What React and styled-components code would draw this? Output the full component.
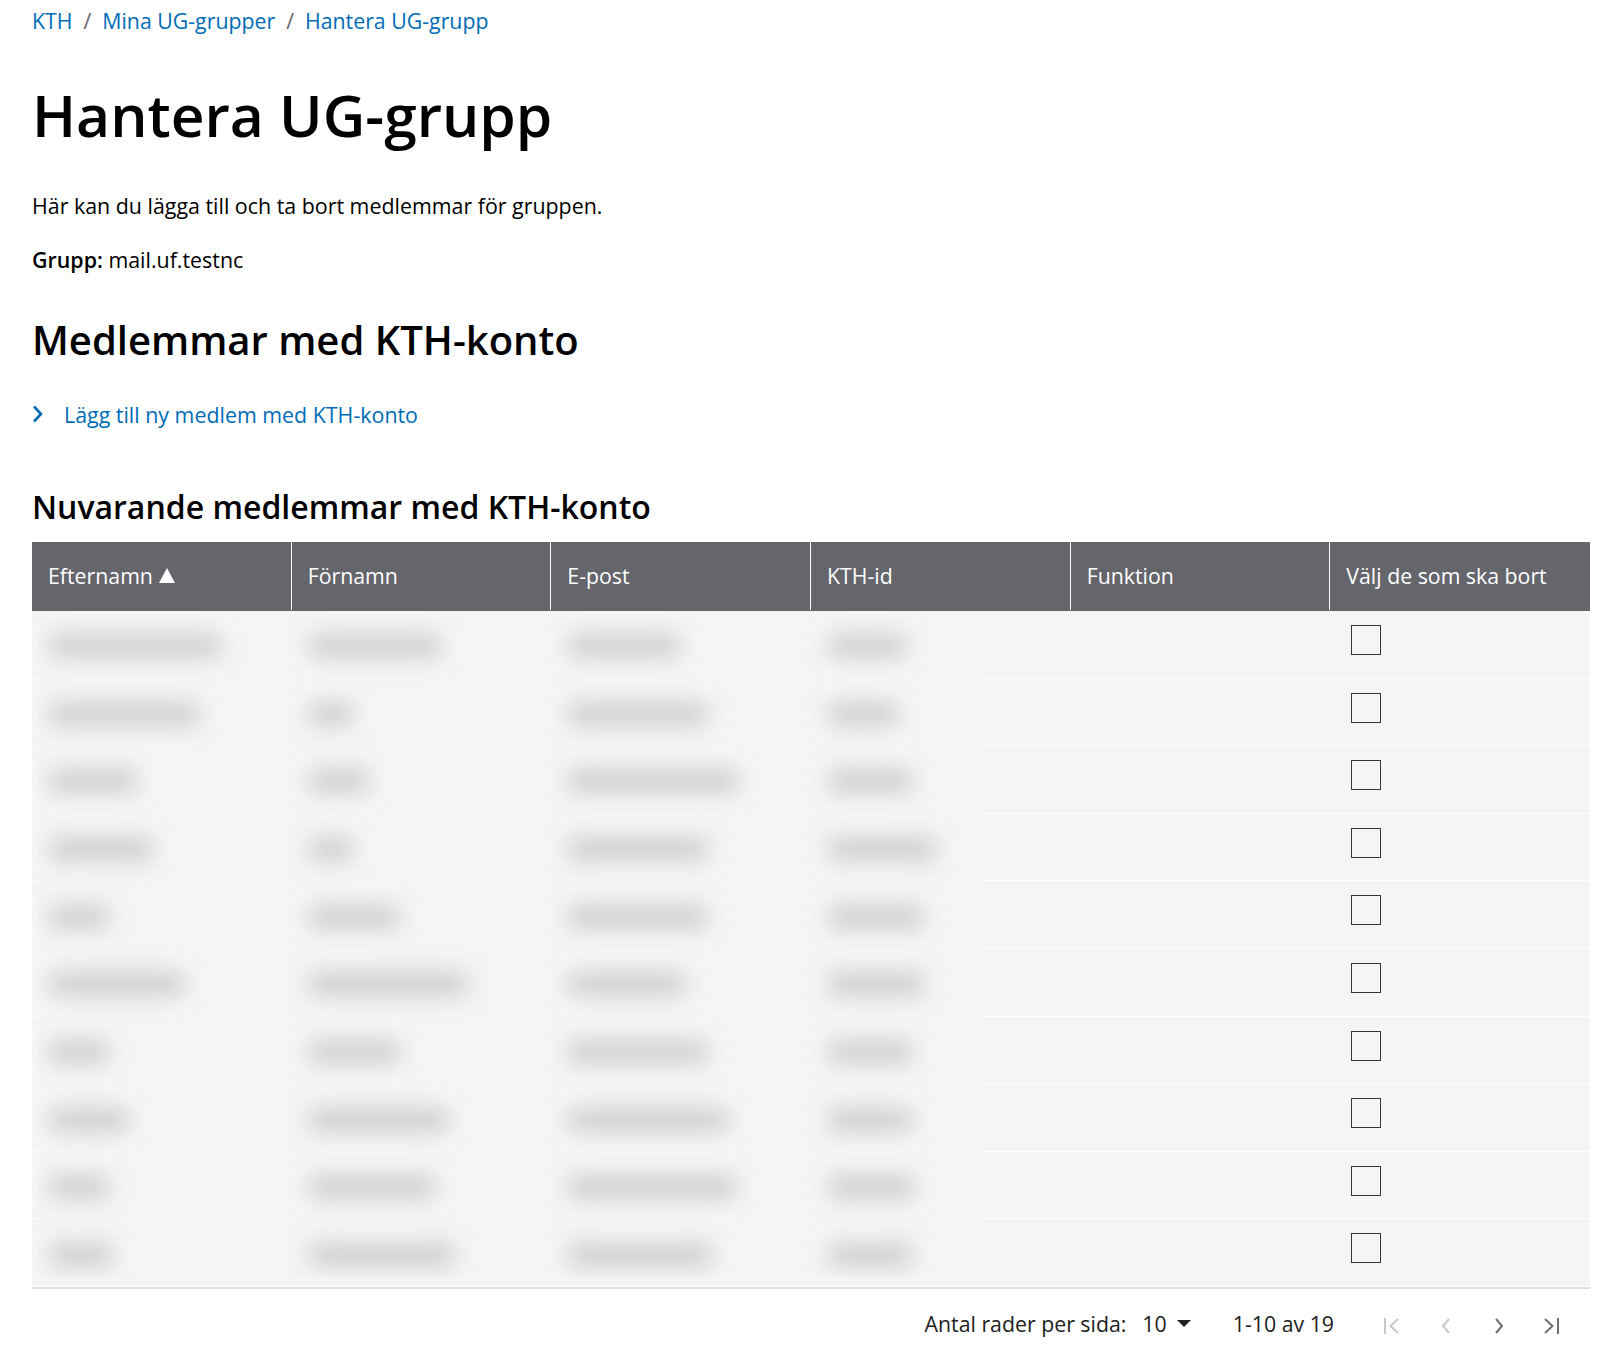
import React from "react";
import styled, { createGlobalStyle } from "styled-components";

const columns = ["Förnamn", "E-post", "KTH-id", "Funktion", "Välj de som ska bort"];

// widths of the blurred-out cell contents, row by row
const hiddenCells = [
  [170, 130, 110, 76],
  [148, 42, 138, 68],
  [86, 58, 168, 82],
  [102, 42, 138, 106],
  [58, 88, 138, 94],
  [134, 156, 116, 94],
  [58, 88, 138, 82],
  [78, 138, 158, 82],
  [58, 124, 166, 84],
  [62, 144, 142, 82],
];

export default function App() {
  return (
    <Page>
      <GlobalStyle />
      <Breadcrumbs>
        <Crumb href="#">KTH</Crumb>
        <Slash>/</Slash>
        <Crumb href="#">Mina UG-grupper</Crumb>
        <Slash>/</Slash>
        <Crumb href="#">Hantera UG-grupp</Crumb>
      </Breadcrumbs>
      <Title>Hantera UG-grupp</Title>
      <Intro>Här kan du lägga till och ta bort medlemmar för gruppen.</Intro>
      <GroupLine>
        <strong>Grupp:</strong> mail.uf.testnc
      </GroupLine>
      <SectionTitle>Medlemmar med KTH-konto</SectionTitle>
      <AddLink href="#">
        <svg width="11" height="18" viewBox="0 0 11 18" fill="none">
          <path d="M2 1.5 9 9l-7 7.5" stroke="#006cb7" strokeWidth="2.6" />
        </svg>
        Lägg till ny medlem med KTH-konto
      </AddLink>
      <TableTitle>Nuvarande medlemmar med KTH-konto</TableTitle>
      <Table>
        <HeaderRow>
          <HeaderCell>
            Efternamn
            <svg width="16" height="15" viewBox="0 0 16 15">
              <path d="M8 0 16 15H0z" fill="#fff" />
            </svg>
          </HeaderCell>
          {columns.map((name) => (
            <HeaderCell key={name}>{name}</HeaderCell>
          ))}
        </HeaderRow>
        <Body>
          {hiddenCells.map((_, i) => (
            <Row key={i}>
              <CheckCell>
                <Checkbox type="checkbox" />
              </CheckCell>
            </Row>
          ))}
          <BlurPanel>
            {hiddenCells.map((row, i) => (
              <BlurRow key={i}>
                {row.map((w, j) => (
                  <BlurCell key={j}>
                    <Smudge $w={w} />
                  </BlurCell>
                ))}
              </BlurRow>
            ))}
          </BlurPanel>
        </Body>
      </Table>
      <Pagination>
        <RowsLabel>Antal rader per sida:</RowsLabel>
        <PageSize>
          10
          <svg width="14" height="7" viewBox="0 0 14 7">
            <path d="M0 0h14L7 7z" fill="#212121" />
          </svg>
        </PageSize>
        <PageRange>1-10 av 19</PageRange>
        <PageIcons>
          <PageIcon $off>
            <path d="M2 2v16M15 3 7.500 10 15 17" />
          </PageIcon>
          <PageIcon $off>
            <path d="M13 3 7 10l6 7" />
          </PageIcon>
          <PageIcon>
            <path d="m7 3 6 7-6 7" />
          </PageIcon>
          <PageIcon>
            <path d="m3 3 7.500 7L3 17M16 2v16" />
          </PageIcon>
        </PageIcons>
      </Pagination>
    </Page>
  );
}

const GlobalStyle = createGlobalStyle`
  body {
    margin: 0;
    background: #fff;
    font-family: "Open Sans", sans-serif;
    color: #000;
  }
`;

const Page = styled.div`
  width: 1558px;
  height: 1352px;
  padding-left: 32px;
  overflow: hidden;
`;

const Breadcrumbs = styled.nav`
  display: flex;
  align-items: center;
  height: 41px;
  font-size: 21.3px;
`;

const Crumb = styled.a`
  color: #006cb7;
  text-decoration: none;
`;

const Slash = styled.span`
  margin: 0 11px;
  color: #65656c;
`;

const Title = styled.h1`
  margin: 29px 0 0;
  font-size: 58.7px;
  line-height: 88px;
  font-weight: 600;
`;

const Intro = styled.p`
  margin: 33px 0 0;
  font-size: 21.4px;
  line-height: 30px;
`;

const GroupLine = styled.p`
  margin: 24px 0 0;
  font-size: 21.4px;
  line-height: 30px;
  strong {
    font-weight: 600;
  }
`;

const SectionTitle = styled.h2`
  margin: 35px 0 0;
  font-size: 40px;
  line-height: 60px;
  font-weight: 600;
`;

const AddLink = styled.a`
  display: flex;
  align-items: center;
  gap: 21px;
  margin-top: 29px;
  height: 30px;
  font-size: 21.4px;
  color: #006cb7;
  text-decoration: none;
`;

const TableTitle = styled.h3`
  margin: 56px 0 0;
  font-size: 32px;
  line-height: 44px;
  font-weight: 600;
`;

const Table = styled.div`
  width: 1558px;
  margin-top: 13px;
`;

const HeaderRow = styled.div`
  display: grid;
  grid-template-columns: repeat(6, 1fr);
  height: 69px;
  background: #65656c;
  padding-bottom: 1px;
  box-sizing: border-box;
`;

const HeaderCell = styled.div`
  display: flex;
  align-items: center;
  gap: 6px;
  padding: 0 0 2px 16px;
  color: #fff;
  font-size: 21.3px;
  border-right: 1px solid #fff;
  &:last-child {
    border-right: 0;
  }
`;

const Body = styled.div`
  position: relative;
  background: #f5f5f5;
  border-bottom: 2px solid #dedede;
`;

const Row = styled.div`
  display: flex;
  justify-content: flex-end;
  height: 67.6px;
  box-sizing: border-box;
  border-bottom: 1px solid #fff;
  &:last-of-type {
    height: 66.6px;
    border-bottom: 0;
  }
`;

const CheckCell = styled.div`
  width: 239px;
  padding-top: 14px;
`;

const Checkbox = styled.input`
  appearance: none;
  display: block;
  width: 30px;
  height: 30px;
  margin: 0;
  background: transparent;
  border: 1px solid #323539;
  border-radius: 0;
`;

/* privacy blur lying over the left part of the table */
const BlurPanel = styled.div`
  position: absolute;
  top: 0;
  left: 5px;
  width: 943px;
  height: 667px;
  overflow: hidden;
  background: #f5f5f5;
`;

const BlurRow = styled.div`
  display: grid;
  grid-template-columns: repeat(4, 259.7px);
  height: 67.7px;
  padding-left: 13px;
  align-items: center;
`;

const BlurCell = styled.div`
  padding-top: 2px;
`;

const Smudge = styled.div`
  width: ${(p) => p.$w}px;
  height: 22px;
  background: #cccccc;
  filter: blur(11px);
`;

const Pagination = styled.div`
  display: flex;
  align-items: center;
  justify-content: flex-end;
  width: 1558px;
  height: 70px;
  font-size: 21.3px;
  color: #212121;
`;

const RowsLabel = styled.span`
  margin-right: 16px;
`;

const PageSize = styled.span`
  display: flex;
  align-items: center;
  gap: 10px;
  margin-right: 42px;
`;

const PageRange = styled.span`
  margin-right: 49px;
`;

const PageIcons = styled.div`
  display: flex;
  gap: 33px;
  padding-right: 28px;
  margin-top: 4px;
`;

const PageIcon = styled.svg.attrs({ viewBox: "0 0 20 20", width: 20, height: 20, fill: "none" })`
  stroke: ${(p) => (p.$off ? "#c8c8c8" : "#707074")};
  stroke-width: 2;
`;
